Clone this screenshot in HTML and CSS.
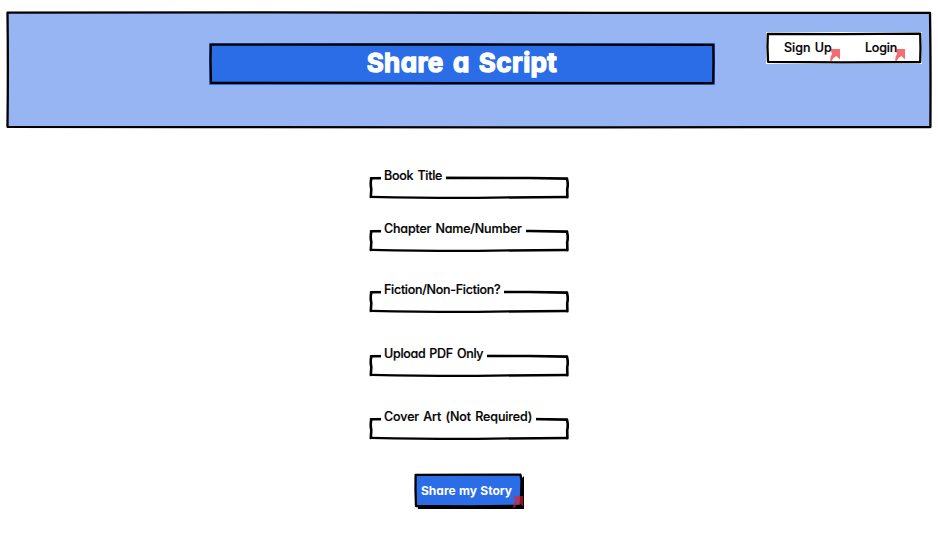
FILE: index.html
```html
<!DOCTYPE html>
<html lang="en">
<head>
<meta charset="utf-8">
<title>Share a Script</title>
<link rel="stylesheet" href="styles.css">
</head>
<body>
<svg class="defs" width="0" height="0">
  <symbol id="flag" viewBox="0 0 10 12"><path d="M.5 0H10V10.5L6.3 7L3.5 9L1.5 12L.2 12L.6 7.5L2.2 5L1.2 2.8Z"/></symbol>
  <symbol id="box" viewBox="0 0 200 24">
    <path class="ink thick" d="M2 3.3L60 2.9L160 3L198 3.6"/>
    <path class="ink thick" d="M2.2 4Q1.2 9 2.3 14L1.8 22"/>
    <path class="ink thick" d="M198 4Q199.4 9 198.2 14L198.4 22.2"/>
    <path class="ink" d="M2 21.8Q70 23.2 125 22.6L198 22"/>
  </symbol>
</svg>
<header class="banner">
  <svg class="frame" viewBox="0 0 926 118"><path class="ink" d="M1.5 1.6L260 1.3L600 1.9L924 1.8Q924.8 50 924.4 116L600 116.4L200 116.1L1.5 115.8Q2.2 55 1.5 1.6Z"/></svg>
  <h1 class="title">
    <svg class="frame" viewBox="0 0 506 42"><path class="ink" d="M1.8 1.6L250 1.5L504.3 1.8L504.5 18L504.2 40L250 40.2L2 39.8L1.5 18Z"/></svg>
    <span>Share a Script</span>
  </h1>
  <nav class="nav">
    <svg class="frame" viewBox="0 0 156 32"><path class="ink" d="M1.8 1.8L75 2.2L154.2 1.6L154.5 16L154.2 30L75 30.3L2 29.8L1.5 15Z"/></svg>
    <a class="signup"><span>Sign Up</span><svg class="flag"><use href="#flag"/></svg></a>
    <a class="login"><span>Login</span><svg class="flag"><use href="#flag"/></svg></a>
  </nav>
</header>
<main class="form">
  <div class="field"><svg class="outline"><use href="#box"/></svg><label class="book">Book Title</label></div>
  <div class="field chapter-row"><svg class="outline"><use href="#box"/></svg><label class="chapter">Chapter Name/Number</label></div>
  <div class="field fiction-row"><svg class="outline"><use href="#box"/></svg><label class="fiction">Fiction/Non-Fiction?</label></div>
  <div class="field upload-row"><svg class="outline"><use href="#box"/></svg><label class="upload">Upload PDF Only</label></div>
  <div class="field"><svg class="outline"><use href="#box"/></svg><label class="cover">Cover Art (Not Required)</label></div>
  <button class="share">
    <svg class="frame" viewBox="0 0 110 37"><path d="M3 5H108L110 3V36H4Z"/><path class="ink blue" d="M1.6 1.8L106.5 1.6L107.5 8L106.8 32.8L55 33.5L2 33L1.5 17Z"/></svg>
    <span>Share my Story</span>
    <svg class="flag"><use href="#flag"/></svg>
  </button>
</main>
</body>
</html>
```
FILE: styles.css
```css
* { box-sizing: border-box; }
body {
  margin: 0;
  padding: 11px 6px 0;
  background: #fff;
  color: #000;
  font-family: Inter, "Liberation Sans", sans-serif;
  font-feature-settings: "cv11" 1;
  font-size: 12.5px;
}
.defs { position: absolute; }
.frame { position: absolute; inset: 0; width: 100%; height: 100%; }
.ink { fill: none; stroke: #000; stroke-width: 2.3; stroke-linejoin: round; stroke-linecap: round; }
.ink.thick { stroke-width: 2.6; }
.ink.blue { fill: #2a6de7; }
.banner {
  position: relative;
  display: flex;
  width: 926px;
  height: 118px;
  background: linear-gradient(#97b5f3, #97b5f3) 2px 2px / 922px 114px no-repeat;
}
.title {
  position: relative;
  width: 506px;
  height: 42px;
  margin: 32px 0 0 203px;
  background: #2a6de7;
  color: #fff;
  font-size: 26px;
  font-weight: 700;
  line-height: 40px;
  letter-spacing: .4px;
  word-spacing: 2.6px;
  text-align: center;
  white-space: nowrap;
}
.title span { position: relative; -webkit-text-stroke: 1.3px #fff; stroke-linejoin: round; }
.nav {
  position: relative;
  display: flex;
  width: 156px;
  height: 32px;
  margin: 21px 0 0 51px;
  padding-left: 18px;
  background: #fff;
  line-height: 31px;
  font-weight: 500;
  -webkit-text-stroke: .2px #000;
}
.nav a { position: relative; white-space: nowrap; }
.signup { width: 81px; }
.signup span { word-spacing: 1px; }
.login span { letter-spacing: -.2px; }
.flag { position: absolute; width: 10px; height: 12px; fill: #ee1c25; opacity: .64; }
.signup .flag { left: 46px; top: 17px; }
.login .flag { left: 30px; top: 17px; }
.form { width: 200px; margin: 39px 0 0 363px; }
.field { position: relative; height: 31px; margin-bottom: 22px; }
.chapter-row { margin-bottom: 30px; }
.fiction-row { margin-bottom: 33px; }
.upload-row { margin-bottom: 32px; }
.outline { position: absolute; left: 0; top: 7px; width: 200px; height: 24px; overflow: visible; }
.field label {
  position: relative;
  display: block;
  height: 16px;
  margin-left: 12px;
  padding-left: 3px;
  background: #fff;
  line-height: 16px;
  font-weight: 500;
  -webkit-text-stroke: .2px #000;
  word-spacing: 1px;
  white-space: nowrap;
}
.field .book { width: 65px; letter-spacing: -.25px; }
.field .chapter { width: 145px; letter-spacing: -.17px; }
.field .fiction { width: 123px; letter-spacing: -.28px; }
.field .upload { width: 106px; letter-spacing: -.3px; }
.field .cover { width: 155px; letter-spacing: -.1px; }
.share {
  position: relative;
  display: block;
  width: 110px;
  height: 37px;
  margin: 33px 0 0 45px;
  padding: 0 0 2px 7px;
  border: 0;
  background: none;
  color: #fff;
  font: 700 12px/35px Inter, "Liberation Sans", sans-serif;
  font-feature-settings: "cv11" 1;
  word-spacing: .5px;
  text-align: left;
  white-space: nowrap;
}
.share span { position: relative; }
.share .flag { left: 99px; top: 23px; }
```
